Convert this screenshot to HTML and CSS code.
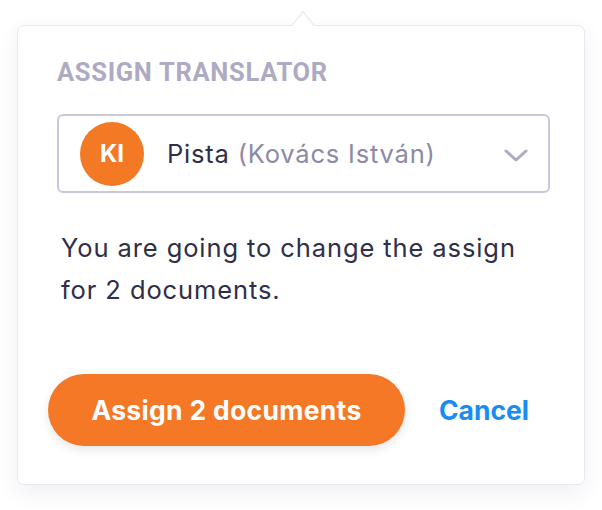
FILE: index.html
```html
<!DOCTYPE html>
<html>
<head>
<meta charset="utf-8">
<link rel="stylesheet" href="styles.css">
</head>
<body>
<div class="popover">
  <div class="caret"></div>
  <h2 class="title">ASSIGN TRANSLATOR</h2>
  <div class="select">
    <div class="avatar">KI</div>
    <div class="name">Pista <span class="full">(Kovács István)</span></div>
    <svg class="chevron" width="24" height="14" viewBox="0 0 24 14"><path d="M2 2 L12 11 L22 2" fill="none" stroke="#aeaac3" stroke-width="3" stroke-linecap="round" stroke-linejoin="round"/></svg>
  </div>
  <p class="message">You are going to change the assign<br>for 2 documents.</p>
  <div class="actions">
    <button class="primary">Assign 2 documents</button>
    <button class="link">Cancel</button>
  </div>
</div>
</body>
</html>
```
FILE: styles.css
```css
* { box-sizing: border-box; }
html, body { margin: 0; padding: 0; background: #fff; }
body {
  font-family: Inter, Roboto, "Noto Sans", sans-serif;
  width: 602px;
  height: 510px;
  padding: 25px 17px 0 17px;
}
.popover {
  position: relative;
  width: 568px;
  height: 460px;
  background: #fff;
  border: 1px solid #e9e8f1;
  border-radius: 7px;
  box-shadow: 0 8px 22px rgba(60, 55, 110, 0.08);
  padding: 30px 35px 0 31px;
}
.caret {
  position: absolute;
  top: -9px;
  left: 277px;
  width: 16px;
  height: 16px;
  background: #fff;
  border-left: 1px solid #e9e8f1;
  border-top: 1px solid #e9e8f1;
  transform: scaleY(1.25) rotate(45deg);
  transform-origin: center;
}
.title {
  margin: 0 0 0 8px;
  font-family: Roboto, sans-serif;
  font-weight: 700;
  font-size: 25.5px;
  letter-spacing: 0.7px;
  color: #aeaac2;
  line-height: 32px;
}
.select {
  margin: 26px 0 0 8px;
  height: 79px;
  width: 493px;
  border: 2px solid #cac7da;
  border-radius: 6px;
  display: flex;
  align-items: center;
  padding: 0 20px 0 21px;
}
.avatar {
  width: 64px;
  height: 64px;
  border-radius: 50%;
  background: #f37925;
  color: #fff;
  font-family: Inter, sans-serif;
  font-weight: 700;
  font-size: 24px;
  display: flex;
  align-items: center;
  justify-content: center;
  flex: none;
}
.name {
  margin-left: 23px;
  font-size: 25.5px;
  letter-spacing: 0.8px;
  color: #302e48;
  flex: 1;
}
.full { color: #8d89a6; }
.chevron { flex: none; margin-top: 4px; }
.message {
  margin: 34px 0 0 12px;
  font-size: 25.5px;
  letter-spacing: 0.9px;
  line-height: 42px;
  color: #302e48;
}
.actions {
  margin-top: 63px;
  display: flex;
  align-items: center;
}
.primary {
  width: 357px;
  height: 72px;
  border: none;
  border-radius: 36px;
  background: #f47825;
  color: #fff;
  font-family: Inter, sans-serif;
  font-weight: 700;
  font-size: 26.5px;
  letter-spacing: 0.3px;
  box-shadow: 0 4px 10px rgba(60, 55, 110, 0.12);
  margin-left: -1px;
  padding: 0;
}
.link {
  margin-left: 34px;
  border: none;
  background: none;
  padding: 0;
  color: #1a8cf1;
  font-family: Inter, sans-serif;
  font-weight: 700;
  font-size: 26.5px;
}
```
